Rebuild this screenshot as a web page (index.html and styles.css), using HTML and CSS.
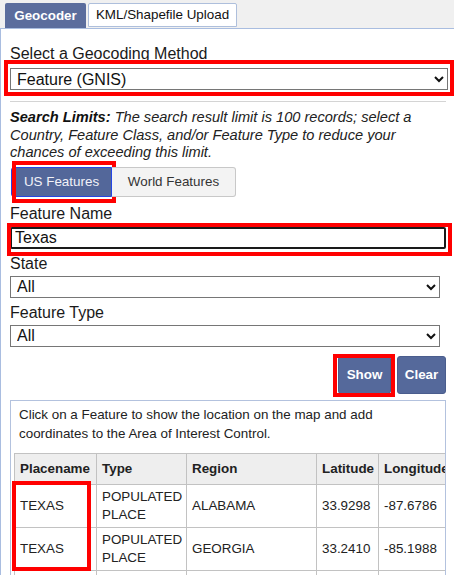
FILE: index.html
```html
<!DOCTYPE html>
<html>
<head>
<meta charset="utf-8">
<link rel="stylesheet" href="styles.css">
</head>
<body>
<div class="tabs">
  <div class="tab active">Geocoder</div>
  <div class="tab">KML/Shapefile Upload</div>
</div>
<div class="panel">
  <label class="lbl lbl-method">Select a Geocoding Method</label>
  <div class="mark-wrap">
    <select class="sel sel-method"><option>Feature (GNIS)</option></select>
    <span class="mark mark-method"></span>
  </div>
  <hr class="divider">
  <p class="limits"><b>Search Limits:</b> The search result limit is 100 records; select a Country, Feature Class, and/or Feature Type to reduce your chances of exceeding this limit.</p>
  <div class="seg-group">
    <button class="seg seg-on">US Features<span class="mark mark-us"></span></button>
    <button class="seg seg-off">World Features</button>
  </div>
  <label class="lbl lbl-name">Feature Name</label>
  <div class="mark-wrap">
    <input class="txt" type="text" value="Texas">
    <span class="mark mark-name"></span>
  </div>
  <label class="lbl lbl-sub">State</label>
  <select class="sel sel-sub"><option>All</option></select>
  <label class="lbl lbl-sub">Feature Type</label>
  <select class="sel sel-sub"><option>All</option></select>
  <div class="actions">
    <button class="act act-show">Show<span class="mark mark-show"></span></button>
    <button class="act act-clear">Clear</button>
  </div>
  <div class="results">
    <p class="hint">Click on a Feature to show the location on the map and add coordinates to the Area of Interest Control.</p>
    <div class="table-wrap">
      <table class="grid">
        <colgroup>
          <col class="c1"><col class="c2"><col class="c3"><col class="c4"><col class="c5">
        </colgroup>
        <thead>
          <tr><th>Placename</th><th>Type</th><th>Region</th><th>Latitude</th><th>Longitude</th></tr>
        </thead>
        <tbody>
          <tr><td>TEXAS</td><td>POPULATED PLACE</td><td>ALABAMA</td><td>33.9298</td><td>-87.6786</td></tr>
          <tr><td>TEXAS</td><td>POPULATED PLACE</td><td>GEORGIA</td><td>33.2410</td><td>-85.1988</td></tr>
          <tr><td>TEXAS</td><td>POPULATED PLACE</td><td>INDIANA</td><td>38.6001</td><td>-86.3422</td></tr>
        </tbody>
      </table>
      <span class="mark mark-col"></span>
    </div>
  </div>
</div>
</body>
</html>
```

FILE: styles.css
```css
* { box-sizing: border-box; }
html, body { margin: 0; padding: 0; background: #fff; }
body {
  font-family: "Liberation Sans", Arial, sans-serif;
  color: #1e1e1e;
  width: 454px;
  height: 575px;
  overflow: hidden;
}

.tabs {
  display: flex;
  align-items: flex-start;
  gap: 2px;
  height: 28px;
  padding: 3px 0 0 5px;
  background: #f0f0f0;
}
.tab {
  height: 24px;
  width: 149px;
  text-align: center;
  font-size: 13.4px;
  line-height: 22px;
  color: #111;
  background: #fff;
  border: 1px solid #aebfdc;
  border-radius: 2px 2px 0 0;
}
.tab.active {
  height: 25px;
  width: 81px;
  line-height: 25px;
  border: none;
  background: #5b6d9d;
  color: #fff;
  font-weight: bold;
}

.panel {
  border-top: 1px solid #a9bde0;
  border-left: 1px solid #a9bde0;
  padding: 16px 8px 0 9px;
}

.lbl {
  display: block;
  font-size: 16px;
  line-height: 18px;
  color: #1a1a1a;
}
.lbl-method { margin-bottom: 5px; }
.lbl-name { margin: 8px 0 4px; }
.lbl-sub { margin: 6px 0 3px; }

.mark-wrap { position: relative; }
.mark {
  position: absolute;
  border: 4px solid #ff0000;
  pointer-events: none;
}

.sel {
  display: block;
  height: 22px;
  padding: 0 2px;
  font-family: "Liberation Sans", Arial, sans-serif;
  font-size: 16px;
  color: #111;
  background: #fff;
  border: 1px solid #767676;
  border-radius: 0;
}
.sel-method { width: 438px; }
.sel-sub { width: 430px; }
.mark-method { left: -6px; top: -8px; width: 450px; height: 36px; }

.divider {
  margin: 11px 0 0;
  border: 0;
  border-top: 1px solid #d4d4d4;
  height: 0;
}

.limits {
  margin: 7px 0 0;
  font-size: 14.6px;
  line-height: 17.5px;
  font-style: italic;
  color: #222;
}
.limits b { color: #111; }

.seg-group {
  display: flex;
  margin: 5px 0 0 1px;
}
.seg {
  position: relative;
  height: 30px;
  font-family: "Liberation Sans", Arial, sans-serif;
  font-size: 13.4px;
  padding: 0;
}
.seg-on {
  width: 101px;
  background: #53679a;
  color: #f2f2f8;
  border: 1px solid #2446e6;
  border-radius: 3px 0 0 3px;
}
.seg-off {
  width: 124px;
  background: #f3f3f3;
  color: #333;
  border: 1px solid #c8c8c8;
  border-left: none;
  border-radius: 0 3px 3px 0;
}
.mark-us { left: 0; top: -7px; width: 104px; height: 42px; }

.txt {
  display: block;
  width: 436px;
  height: 22px;
  padding: 0 3px;
  font-family: "Liberation Sans", Arial, sans-serif;
  font-size: 16px;
  color: #111;
  border: 2px solid #1a1a1a;
  border-radius: 2px;
  outline: none;
}
.mark-name { left: -3px; top: -4px; width: 445px; height: 33px; }

.actions {
  display: flex;
  justify-content: flex-end;
  gap: 6px;
  margin-top: 9px;
}
.act {
  position: relative;
  height: 38px;
  padding: 0;
  font-family: "Liberation Sans", Arial, sans-serif;
  font-size: 13.4px;
  font-weight: bold;
  color: #fff;
  background: #55699b;
  border: 1px solid #4a5d8d;
  border-radius: 3px;
}
.act-show { width: 53px; }
.act-clear { width: 49px; }
.mark-show { left: -6px; top: -3px; width: 62px; height: 43px; }

.results {
  margin-top: 6px;
  border: 1px solid #b3c2de;
  border-bottom: none;
  padding: 0 0 0 3px;
  height: 200px;
  overflow: hidden;
}
.hint {
  margin: 0;
  padding: 4px 0 0 5px;
  font-size: 13.4px;
  line-height: 19px;
  color: #222;
}
.table-wrap {
  position: relative;
  margin-top: 10px;
  width: 444px;
}
.grid {
  border-collapse: collapse;
  table-layout: fixed;
  width: 444px;
  font-size: 13.4px;
  line-height: 18px;
  color: #222;
}
.c1 { width: 82px; }
.c2 { width: 90px; }
.c3 { width: 130px; }
.c4 { width: 62px; }
.c5 { width: 80px; }
.grid th, .grid td {
  border: 1px solid #c2c2c2;
  text-align: left;
  overflow: hidden;
}
.grid th {
  padding: 6px 5px;
  background: #eeeeee;
  font-weight: bold;
  white-space: nowrap;
}
.grid td {
  padding: 3px 5px;
  vertical-align: middle;
}
.mark-col { left: -2px; top: 28px; width: 79px; height: 90px; }
```
